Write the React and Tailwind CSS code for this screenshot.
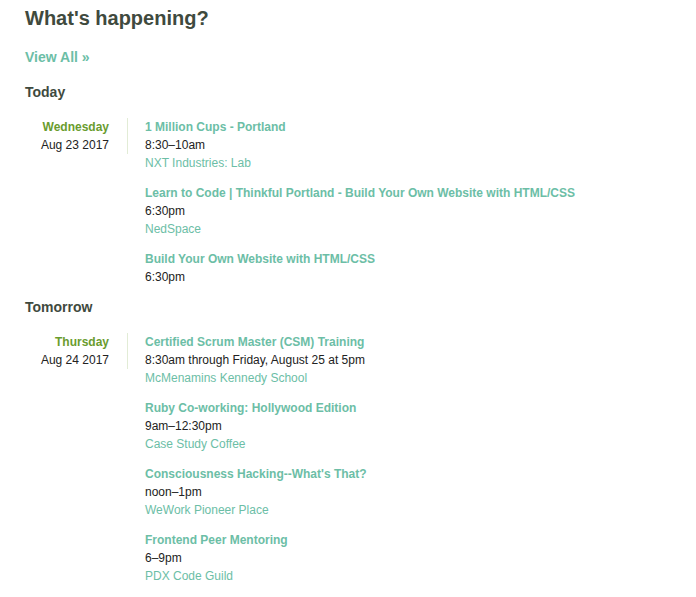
import React from 'react';

const DAYS = [
    {
        label: 'Today',
        weekday: 'Wednesday',
        date: 'Aug 23 2017',
        events: [
            { title: '1 Million Cups - Portland', time: '8:30–10am', venue: 'NXT Industries: Lab' },
            { title: 'Learn to Code | Thinkful Portland - Build Your Own Website with HTML/CSS', time: '6:30pm', venue: 'NedSpace' },
            { title: 'Build Your Own Website with HTML/CSS', time: '6:30pm' },
        ],
    },
    {
        label: 'Tomorrow',
        weekday: 'Thursday',
        date: 'Aug 24 2017',
        events: [
            { title: 'Certified Scrum Master (CSM) Training', time: '8:30am through Friday, August 25 at 5pm', venue: 'McMenamins Kennedy School' },
            { title: 'Ruby Co-working: Hollywood Edition', time: '9am–12:30pm', venue: 'Case Study Coffee' },
            { title: "Consciousness Hacking--What's That?", time: 'noon–1pm', venue: 'WeWork Pioneer Place' },
            { title: 'Frontend Peer Mentoring', time: '6–9pm', venue: 'PDX Code Guild' },
        ],
    },
];

const EventItem = ({ event }) => (
    <div className="mb-3">
        <a href="#" className="block font-bold text-[#6cbea6]">{event.title}</a>
        <div className="text-[#222]">{event.time}</div>
        {event.venue && <a href="#" className="block text-[#6cbea6]">{event.venue}</a>}
    </div>
);

const DaySection = ({ day }) => (
    <div>
        <h3 className="text-[14px] leading-[18px] font-bold text-[#3f4a3e] mb-[17px]">{day.label}</h3>
        <div className="flex items-start">
            <div className="w-[84px] text-right">
                <div className="font-bold text-[#6a9c2e]">{day.weekday}</div>
                <div className="text-[#222]">{day.date}</div>
            </div>
            <div className="w-[18px] shrink-0" />
            <div className="w-px h-[36px] bg-[#e2ecd6]" />
            <div className="pl-[17px] flex-1">
                {day.events.map((event) => (
                    <EventItem key={event.title} event={event} />
                ))}
            </div>
        </div>
    </div>
);

export default function App() {
    return (
        <div className="bg-white min-h-[597px] px-[25px] pt-[6px] text-[12px] leading-[18px]" style={{ fontFamily: '"Liberation Sans", Arial, sans-serif' }}>
            <h1 className="text-[20px] leading-[24px] font-bold text-[#3f4a3e] mb-[18px]">What's happening?</h1>
            <a href="#" className="block text-[14px] leading-[18px] font-bold text-[#6cbea6] mb-[17px]">View All »</a>
            {DAYS.map((day) => (
                <DaySection key={day.label} day={day} />
            ))}
        </div>
    );
}
